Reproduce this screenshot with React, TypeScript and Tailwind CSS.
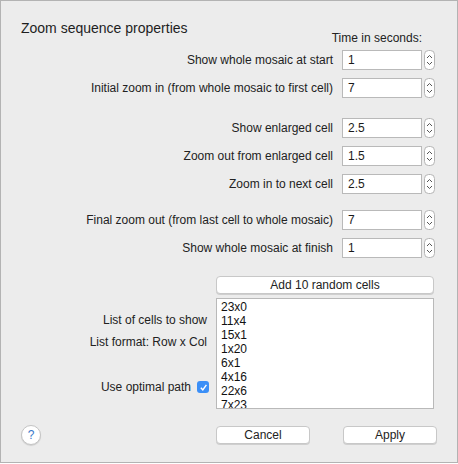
import React from "react";

function Stepper() {
  return (
    <svg width="11" height="20" viewBox="0 0 11 20" className="block">
      <rect x="0.5" y="0.5" width="10" height="19" rx="4" fill="#ffffff" stroke="#b4b4b4" />
      <path d="M3 8 L5.5 5.5 L8 8" fill="none" stroke="#555" strokeWidth="1" />
      <path d="M3 12 L5.5 14.5 L8 12" fill="none" stroke="#555" strokeWidth="1" />
    </svg>
  );
}

function Row({ label, value, className = "" }: { label: string; value: string; className?: string }) {
  return (
    <div className={"flex items-center h-[20px] " + className}>
      <div className="w-[332px] text-right whitespace-nowrap">{label}</div>
      <div className="ml-[9px] w-[80px] h-[20px] bg-white border border-[#b9b9b9] flex items-center pl-[5px] text-[12px] text-[#1a1a1a]">
        {value}
      </div>
      <div className="ml-[2px]">
        <Stepper />
      </div>
    </div>
  );
}

function Btn({ children, className = "" }: { children: React.ReactNode; className?: string }) {
  return (
    <div
      className={
        "h-[18px] bg-white rounded-[4px] border border-[#c8c8c8] shadow-[0_1px_0_rgba(0,0,0,0.12)] flex items-center justify-center text-[12px] text-[#222] " +
        className
      }
    >
      {children}
    </div>
  );
}

export default function App() {
  const cells = ["23x0", "11x4", "15x1", "1x20", "6x1", "4x16", "22x6", "7x23"];
  return (
    <div
      className="w-[458px] h-[463px] bg-[#ececec] border border-[#b3b3b3] text-[12px] text-[#222] overflow-hidden"
      style={{ fontFamily: '"Liberation Sans", Arial, sans-serif' }}
    >
      <div className="pl-[20px] pt-[18px] h-[18px] leading-[18px] text-[14px] text-[#1e1e1e] box-content">
        Zoom sequence properties
      </div>
      <div className="flex justify-end pr-[35px] mt-[-7px] h-[16px] leading-[16px]">Time in seconds:</div>
      <div className="mt-[4px] flex flex-col">
        <Row label="Show whole mosaic at start" value="1" />
        <Row label="Initial zoom in (from whole mosaic to first cell)" value="7" className="mt-[8px]" />
        <Row label="Show enlarged cell" value="2.5" className="mt-[20px]" />
        <Row label="Zoom out from enlarged cell" value="1.5" className="mt-[8px]" />
        <Row label="Zoom in to next cell" value="2.5" className="mt-[8px]" />
        <Row label="Final zoom out (from last cell to whole mosaic)" value="7" className="mt-[16px]" />
        <Row label="Show whole mosaic at finish" value="1" className="mt-[8px]" />
      </div>
      <div className="mt-[18px] flex">
        <div className="w-[215px]" />
        <Btn className="w-[218px]">Add 10 random cells</Btn>
      </div>
      <div className="mt-[4px] flex">
        <div className="w-[215px] relative">
          <div className="absolute right-[9px] top-[15px] whitespace-nowrap leading-[14px]">List of cells to show</div>
          <div className="absolute right-[9px] top-[37px] whitespace-nowrap leading-[14px]">List format: Row x Col</div>
          <div className="absolute right-[7px] top-[82px] flex items-center whitespace-nowrap leading-[14px]">
            <span>Use optimal path</span>
            <span className="ml-[6px] w-[12px] h-[12px] rounded-[3px] bg-[#3b8ff7] flex items-center justify-center">
              <svg width="9" height="9" viewBox="0 0 9 9">
                <path d="M1.8 4.8 L3.8 6.8 L7.4 1.8" fill="none" stroke="#fff" strokeWidth="1.4" />
              </svg>
            </span>
          </div>
        </div>
        <div className="w-[218px] h-[111px] bg-white border border-[#b9b9b9] pl-[4px] pt-[1px] overflow-hidden text-[12px] leading-[14px] text-[#111]">
          {cells.map((c) => (
            <div key={c}>{c}</div>
          ))}
        </div>
      </div>
      <div className="mt-[16px] flex items-center">
        <div className="w-[215px] pl-[20px]">
          <div className="w-[20px] h-[20px] rounded-full bg-white border border-[#c4c4c4] shadow-[0_1px_1px_rgba(0,0,0,0.12)] flex items-center justify-center text-[12px] text-[#3a78c9]">
            ?
          </div>
        </div>
        <Btn className="w-[94px]">Cancel</Btn>
        <Btn className="w-[94px] ml-[33px]">Apply</Btn>
      </div>
    </div>
  );
}
